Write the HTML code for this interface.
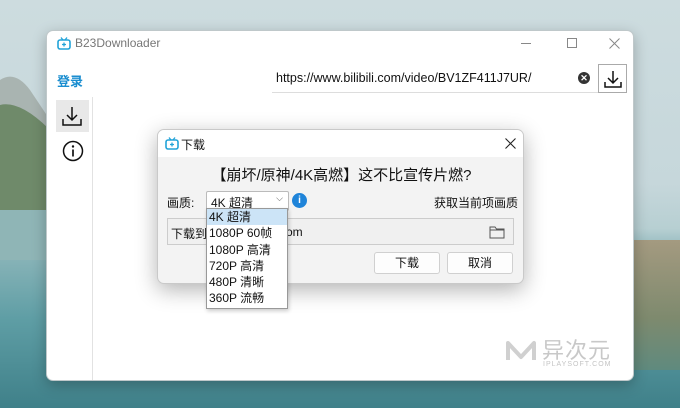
<!DOCTYPE html>
<html><head><meta charset="utf-8"><style>
*{margin:0;padding:0;box-sizing:border-box}
body{width:680px;height:408px;overflow:hidden;position:relative;font-family:"Liberation Sans","Noto Sans CJK SC",sans-serif;font-size:12px;color:#111;
background:linear-gradient(180deg,#cddcdf 0%,#c6d7db 45%,#b7cfd2 56%,#8bb5b9 62%,#5f9ea5 78%,#3f8089 100%)}
.abs{position:absolute}
.win{position:absolute;left:46px;top:30px;width:588px;height:351px;background:#fff;border:1px solid #bfc8ca;border-radius:7px;overflow:hidden;box-shadow:0 4px 14px rgba(0,0,0,.25)}
.dlg{position:absolute;left:157px;top:129px;width:367px;height:155px;background:#f3f3f3;border:1px solid #c9c9c9;border-radius:7px;box-shadow:0 6px 22px rgba(0,0,0,.3);overflow:hidden}
.btn{position:absolute;background:#fdfdfd;border:1px solid #d0d0d0;border-radius:3px;text-align:center;line-height:20px}
</style></head><body>
<svg class="abs" style="left:0;top:60px" width="50" height="200" viewBox="0 0 50 200"><path d="M0 20 Q15 10 30 30 L50 60 V180 H0Z" fill="#a9b4b1"/><path d="M0 45 Q20 40 50 70 V175 H0Z" fill="#6f8a6a"/><path d="M0 150 H50 V200 H0Z" fill="#8fb5b6"/></svg>
<div class="abs" style="left:634px;top:240px;width:46px;height:130px;background:linear-gradient(180deg,#a49a80,#7e8a6e 60%,#5f8a7e)"></div>
<div class="win">
 <svg class="abs" style="left:10px;top:6px" width="14" height="13" viewBox="0 0 14 13"><rect x="1" y="3" width="12" height="9" rx="2" fill="none" stroke="#22a3d8" stroke-width="1.6"/><path d="M4 0.5L6 3M10 0.5L8 3M7 5.5v4M5 7.5h4" stroke="#22a3d8" stroke-width="1.3"/></svg>
 <div class="abs" style="left:28px;top:5px;font-size:12px;color:#777">B23Downloader</div>
 <div class="abs" style="left:474px;top:12px;width:10px;height:1px;background:#888"></div>
 <div class="abs" style="left:520px;top:7px;width:10px;height:10px;border:1px solid #888"></div>
 <svg class="abs" style="left:562px;top:7px" width="11" height="11" viewBox="0 0 11 11"><path d="M0.5 0.5l10 10M10.5 0.5l-10 10" stroke="#888" stroke-width="1"/></svg>
 <div class="abs" style="left:10px;top:40px;color:#1b8ed0;font-size:13px;font-weight:bold">登录</div>
 <div class="abs" style="left:225px;top:33px;width:326px;height:29px;background:#fff;border-bottom:1px solid #ddd"></div>
 <div class="abs" style="left:229px;top:40px;font-size:12.5px">https://www.bilibili.com/video/BV1ZF411J7UR/</div>
 <div class="abs" style="left:531px;top:41px;width:12px;height:12px;border-radius:50%;background:#333;color:#fff;font-size:9px;line-height:12px;text-align:center;font-weight:bold">✕</div>
 <div class="abs" style="left:551px;top:33px;width:29px;height:29px;background:#fff;border:1px solid #aaa"></div>
 <svg class="abs" style="left:556px;top:38px" width="20" height="20" viewBox="0 0 20 20"><path d="M10 2v12M5 9l5 5 5-5M2 13v5h16v-5" fill="none" stroke="#111" stroke-width="1.5"/></svg>
 <div class="abs" style="left:9px;top:69px;width:33px;height:32px;background:#e8e8e8"></div>
 <svg class="abs" style="left:14px;top:74px" width="22" height="22" viewBox="0 0 22 22"><path d="M11 2v13M6 10l5 5 5-5M2 14v6h18v-6" fill="none" stroke="#111" stroke-width="1.5"/></svg>
 <svg class="abs" style="left:15px;top:109px" width="22" height="22" viewBox="0 0 22 22"><circle cx="11" cy="11" r="9.5" fill="none" stroke="#111" stroke-width="1.5"/><circle cx="11" cy="6.5" r="1.2" fill="#111"/><path d="M11 9.5v7" stroke="#111" stroke-width="1.7"/></svg>
 <div class="abs" style="left:45px;top:66px;width:1px;height:285px;background:#e2e2e2"></div>
 <svg class="abs" style="left:458px;top:308px" width="32" height="24" viewBox="0 0 32 24"><path d="M3 21V4l13 14L29 4v17" fill="none" stroke="#d0d0d0" stroke-width="4" stroke-linejoin="round"/></svg>
 <div class="abs" style="left:495px;top:302px;font-size:22px;color:#c8c8c8;letter-spacing:1px">异次元</div>
 <div class="abs" style="left:496px;top:330px;font-size:7px;color:#c4c4c4;letter-spacing:1px">IPLAYSOFT.COM</div>
</div>
<div class="dlg">
 <div class="abs" style="left:0;top:0;width:367px;height:27px;background:#fff"></div>
 <svg class="abs" style="left:7px;top:7px" width="14" height="13" viewBox="0 0 14 13"><rect x="1" y="3" width="12" height="9" rx="2" fill="none" stroke="#22a3d8" stroke-width="1.6"/><path d="M4 0.5L6 3M10 0.5L8 3M7 5.5v4M5 7.5h4" stroke="#22a3d8" stroke-width="1.3"/></svg>
 <div class="abs" style="left:23px;top:6px;font-size:12px">下载</div>
 <svg class="abs" style="left:347px;top:8px" width="11" height="11" viewBox="0 0 11 11"><path d="M0.5 0.5l10 10M10.5 0.5l-10 10" stroke="#222" stroke-width="1.1"/></svg>
 <div class="abs" style="left:0;top:34px;width:367px;text-align:center;font-size:15px">【崩坏/原神/4K高燃】这不比宣传片燃?</div>
 <div class="abs" style="left:9px;top:64px">画质:</div>
 <div class="abs" style="left:48px;top:61px;width:83px;height:20px;background:#fff;border:1px solid #bbb;border-radius:2px;padding:2px 4px">4K 超清<span style="position:absolute;right:5px;top:1px;font-size:9px;color:#555">⌵</span></div>
 <div class="abs" style="left:134px;top:63px;width:15px;height:15px;border-radius:50%;background:#1f84d9;color:#fff;font-size:10px;text-align:center;line-height:15px;font-weight:bold">i</div>
 <div class="abs" style="left:276px;top:64px">获取当前项画质</div>
 <div class="abs" style="left:9px;top:88px;width:347px;height:27px;border:1px solid #ccc;background:#f0f0f0"></div>
 <div class="abs" style="left:13px;top:95px">下载到:</div>
 <div class="abs" style="left:128px;top:95px">om</div>
 <svg class="abs" style="left:331px;top:95px" width="16" height="14" viewBox="0 0 16 14"><path d="M1 2h5l1.5 2H15v9H1z M1 5h14" fill="none" stroke="#555" stroke-width="1"/></svg>
 <div class="btn" style="left:216px;top:122px;width:66px;height:22px">下载</div>
 <div class="btn" style="left:289px;top:122px;width:66px;height:22px">取消</div>
</div>
<div class="abs" style="left:206px;top:208px;width:82px;height:101px;background:#fff;border:1px solid #999;box-shadow:1px 2px 4px rgba(0,0,0,.2);font-size:12px;line-height:16.3px">
 <div style="background:#cce4f7;padding-left:2px">4K 超清</div>
 <div style="padding-left:2px">1080P 60帧</div>
 <div style="padding-left:2px">1080P 高清</div>
 <div style="padding-left:2px">720P 高清</div>
 <div style="padding-left:2px">480P 清晰</div>
 <div style="padding-left:2px">360P 流畅</div>
</div>
</body></html>
